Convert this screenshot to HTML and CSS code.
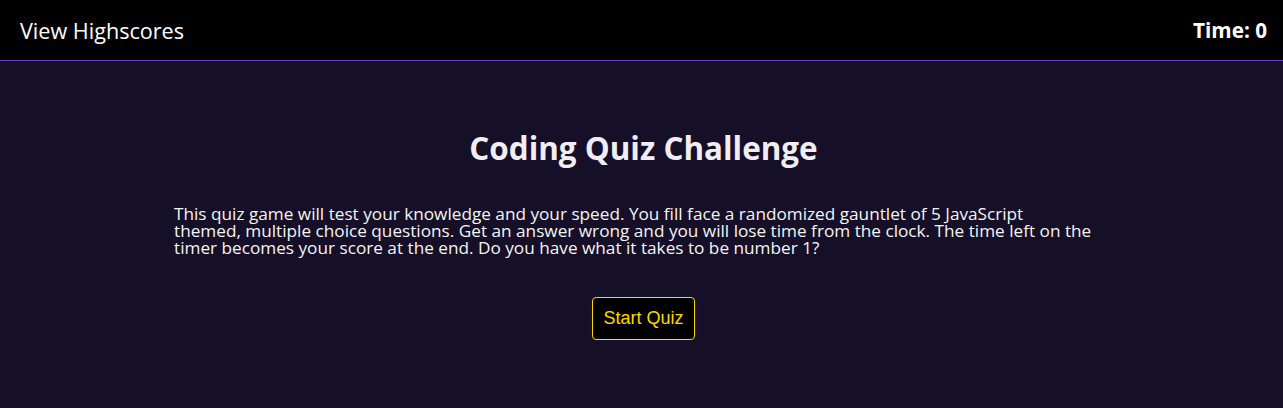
FILE: index.html
```html
<!DOCTYPE html>
<html>
<head>
<meta charset="utf-8">
<link rel="stylesheet" href="styles.css">
</head>
<body>
<header class="topbar">
  <a class="highscores">View Highscores</a>
  <div class="timer">Time: 0</div>
</header>
<main class="intro">
  <h1 class="title">Coding Quiz Challenge</h1>
  <p class="desc">This quiz game will test your knowledge and your speed. You fill face a randomized gauntlet of 5 JavaScript themed, multiple choice questions. Get an answer wrong and you will lose time from the clock. The time left on the timer becomes your score at the end. Do you have what it takes to be number 1?</p>
  <button class="start">Start Quiz</button>
</main>
</body>
</html>
```
FILE: styles.css
```css
html, body {
  margin: 0;
  padding: 0;
}
body {
  background: #160f28;
  color: #f2f2f2;
  font-family: "Open Sans", "Noto Sans", sans-serif;
  height: 408px;
}
.topbar {
  height: 60px;
  background: #000;
  border-bottom: 1px solid #6b3fc0;
  display: flex;
  align-items: center;
  justify-content: space-between;
  padding: 0 16px 0 20px;
}
.highscores {
  color: #fff;
  font-size: 21.6px;
}
.timer {
  color: #fff;
  font-size: 20.7px;
  font-weight: 700;
}
.intro {
  display: flex;
  flex-direction: column;
  align-items: center;
  padding-top: 66px;
  padding-left: 4px;
}
.title {
  margin: 0;
  font-size: 31.4px;
  line-height: 42px;
  font-weight: 700;
  color: #f0eef4;
}
.desc {
  width: 920px;
  margin: 36px 19px 0 0;
  font-size: 17.2px;
  line-height: 17px;
  color: #f4f4f4;
}
.start {
  margin-top: 41px;
  background: #000;
  color: #ffd700;
  border: 1px solid #ffd700;
  border-radius: 4px;
  font-family: "Liberation Sans", Arial, sans-serif;
  font-size: 18px;
  width: 103px;
  height: 43px;
  padding: 0;
}
```
